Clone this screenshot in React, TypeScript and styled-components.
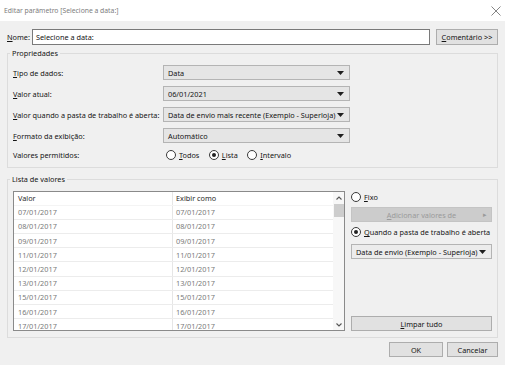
import styled, { createGlobalStyle } from "styled-components";

const GlobalStyle = createGlobalStyle`
  html, body {
    margin: 0;
    padding: 0;
    background: #f0f0f0;
  }
  body {
    font-family: "Noto Sans", "Open Sans", sans-serif;
  }
`;

const Window = styled.div`
  width: 505px;
  height: 365px;
  display: flex;
  flex-direction: column;
  background: #f0f0f0;
  color: #141414;
  font-size: 7.3px;
  white-space: nowrap;
  overflow: hidden;
`;

const TitleBar = styled.div`
  height: 21px;
  flex-shrink: 0;
  background: #ffffff;
  display: flex;
  align-items: center;
  justify-content: space-between;
  padding: 0 4px 0 4px;
  box-sizing: border-box;
`;

const Title = styled.span`
  color: #7c7c7c;
  font-size: 6.8px;
`;

const Body = styled.div`
  flex: 1;
  display: flex;
  flex-direction: column;
  padding: 8px 7px 0 7px;
`;

const NameRow = styled.div`
  display: flex;
  align-items: center;
  height: 16px;
`;

const NameLabel = styled.span`
  width: 25px;
`;

const TextInput = styled.div`
  width: 398px;
  height: 16px;
  box-sizing: border-box;
  border: 1px solid #7a7a7a;
  background: #ffffff;
  display: flex;
  align-items: center;
  padding-left: 3px;
`;

const Button = styled.div<{ $w?: number; $disabled?: boolean }>`
  width: ${(p) => (p.$w ? `${p.$w}px` : "auto")};
  height: 15px;
  box-sizing: border-box;
  border: 1px solid ${(p) => (p.$disabled ? "#c4c4c4" : "#adadad")};
  background: ${(p) => (p.$disabled ? "#cccccc" : "#e1e1e1")};
  color: ${(p) => (p.$disabled ? "#9a9a9a" : "#141414")};
  display: flex;
  align-items: center;
  justify-content: center;
`;

const CommentButton = styled(Button)`
  margin-left: 6px;
  height: 16px;
`;

const Group = styled.fieldset<{ $mt: number }>`
  margin: ${(p) => p.$mt}px 0 0 0;
  padding: 0 5px 6px 5px;
  border: 1px solid #dcdcdc;
  min-width: 0;
`;

const Legend = styled.legend`
  padding: 0 2px;
  margin-left: -3px;
  line-height: 12px;
  font-size: 7.3px;
`;

const PropGrid = styled.div`
  display: grid;
  grid-template-columns: 150px 187px;
  grid-template-rows: 15px 15px 15px 15px 12px;
  row-gap: 6px;
  align-items: center;
  padding: 6px 0 0 0;
`;

const Select = styled.div<{ $bg?: string }>`
  height: 15px;
  box-sizing: border-box;
  border: 1px solid #b4b4b4;
  background: ${(p) => p.$bg || "#e5e5e5"};
  display: flex;
  align-items: center;
  justify-content: space-between;
  padding: 0 5px 0 4px;
`;

const RadioRow = styled.div`
  display: flex;
  align-items: center;
  gap: 9.5px;
  margin-left: 3px;
`;

const RadioItem = styled.div`
  display: flex;
  align-items: center;
  gap: 3px;
  height: 12px;
`;

const RadioCircle = styled.span<{ $on?: boolean }>`
  width: 10px;
  height: 10px;
  box-sizing: border-box;
  border-radius: 50%;
  border: 1px solid #3a3a3a;
  background: #ffffff;
  display: flex;
  align-items: center;
  justify-content: center;
  &::after {
    content: "";
    width: 4px;
    height: 4px;
    border-radius: 50%;
    background: ${(p) => (p.$on ? "#222222" : "transparent")};
  }
`;

const ListArea = styled.div`
  display: flex;
  gap: 6px;
  padding-top: 6px;
`;

const ListBox = styled.div`
  flex: 1;
  height: 140px;
  box-sizing: border-box;
  border: 1px solid #8a8a8a;
  background: #ffffff;
  display: flex;
  overflow: hidden;
`;

const Table = styled.div`
  flex: 1;
  display: flex;
  flex-direction: column;
  overflow: hidden;
`;

const Row = styled.div<{ $head?: boolean }>`
  display: flex;
  flex-shrink: 0;
  height: ${(p) => (p.$head ? "13.6px" : "14.2px")};
  box-sizing: border-box;
  border-bottom: 1px solid ${(p) => (p.$head ? "#f4f4f4" : "#ececec")};
  color: ${(p) => (p.$head ? "#2a2a2a" : "#7a7a7a")};
`;

const Cell = styled.div<{ $first?: boolean }>`
  display: flex;
  align-items: center;
  width: ${(p) => (p.$first ? "159px" : "auto")};
  flex: ${(p) => (p.$first ? "none" : "1")};
  box-sizing: border-box;
  padding-left: ${(p) => (p.$first ? "4px" : "3px")};
  border-right: ${(p) => (p.$first ? "1px solid #e6e6e6" : "none")};
`;

const ScrollBar = styled.div`
  width: 11px;
  background: #f7f7f7;
  display: flex;
  flex-direction: column;
  align-items: center;
`;

const ScrollArrow = styled.div`
  height: 11px;
  width: 11px;
  display: flex;
  align-items: center;
  justify-content: center;
`;

const Thumb = styled.div`
  width: 10px;
  height: 13px;
  background: #cdcdcd;
  margin-top: 1px;
`;

const ScrollTrack = styled.div`
  flex: 1;
`;

const SidePanel = styled.div`
  width: 141px;
  display: flex;
  flex-direction: column;
`;

const SideGap = styled.div<{ $h: number }>`
  height: ${(p) => p.$h}px;
  flex-shrink: 0;
`;

const AddLabel = styled.span`
  flex: 1;
  text-align: center;
`;

const AddArrow = styled.span`
  width: 12px;
  display: flex;
  justify-content: center;
  font-size: 7px;
`;

const ClearButton = styled(Button)`
  margin-top: auto;
`;

const Footer = styled.div`
  display: flex;
  justify-content: flex-end;
  gap: 4px;
  margin-top: 4px;
`;

const DownTriangle = () => (
  <svg width="7" height="4" viewBox="0 0 7 4">
    <polygon points="0,0 7,0 3.5,4" fill="#1e1e1e" />
  </svg>
);

const Chevron = ({ up }: { up?: boolean }) => (
  <svg width="6" height="4" viewBox="0 0 6 4">
    <polyline
      points={up ? "0.5,3.5 3,1 5.5,3.5" : "0.5,0.5 3,3 5.5,0.5"}
      fill="none"
      stroke="#555"
      strokeWidth="1.1"
    />
  </svg>
);

const Radio = ({ on, label, u }: { on?: boolean; label: string; u: string }) => (
  <RadioItem>
    <RadioCircle $on={on} />
    <span>
      <u>{u}</u>
      {label}
    </span>
  </RadioItem>
);

const dates = [
  "07/01/2017",
  "08/01/2017",
  "09/01/2017",
  "11/01/2017",
  "12/01/2017",
  "13/01/2017",
  "15/01/2017",
  "16/01/2017",
  "17/01/2017",
];

export default function App() {
  return (
    <Window>
      <GlobalStyle />
      <TitleBar>
        <Title>Editar parâmetro [Selecione a data:]</Title>
        <svg width="10" height="10" viewBox="0 0 10 10">
          <path d="M0.5 0.5 L9.5 9.5 M9.5 0.5 L0.5 9.5" stroke="#666" strokeWidth="0.8" />
        </svg>
      </TitleBar>
      <Body>
        <NameRow>
          <NameLabel>
            <u>N</u>ome:
          </NameLabel>
          <TextInput>Selecione a data:</TextInput>
          <CommentButton $w={62}>
            <span>
              <u>C</u>omentário &gt;&gt;
            </span>
          </CommentButton>
        </NameRow>

        <Group $mt={2}>
          <Legend>Propriedades</Legend>
          <PropGrid>
            <span>
              <u>T</u>ipo de dados:
            </span>
            <Select>
              Data
              <DownTriangle />
            </Select>
            <span>
              <u>V</u>alor atual:
            </span>
            <Select>
              06/01/2021
              <DownTriangle />
            </Select>
            <span>
              <u>V</u>alor quando a pasta de trabalho é aberta:
            </span>
            <Select>
              Data de envio mais recente (Exemplo - Superloja)
              <DownTriangle />
            </Select>
            <span>
              <u>F</u>ormato da exibição:
            </span>
            <Select>
              Automático
              <DownTriangle />
            </Select>
            <span>Valores permitidos:</span>
            <RadioRow>
              <Radio u="T" label="odos" />
              <Radio on u="L" label="ista" />
              <Radio u="I" label="ntervalo" />
            </RadioRow>
          </PropGrid>
        </Group>

        <Group $mt={5}>
          <Legend>Lista de valores</Legend>
          <ListArea>
            <ListBox>
              <Table>
                <Row $head>
                  <Cell $first>Valor</Cell>
                  <Cell>Exibir como</Cell>
                </Row>
                {dates.map((d) => (
                  <Row key={d}>
                    <Cell $first>{d}</Cell>
                    <Cell>{d}</Cell>
                  </Row>
                ))}
              </Table>
              <ScrollBar>
                <ScrollArrow>
                  <Chevron up />
                </ScrollArrow>
                <Thumb />
                <ScrollTrack />
                <ScrollArrow>
                  <Chevron />
                </ScrollArrow>
              </ScrollBar>
            </ListBox>
            <SidePanel>
              <Radio u="F" label="ixo" />
              <SideGap $h={4} />
              <Button $disabled>
                <AddArrow />
                <AddLabel>
                  <u>A</u>dicionar valores de
                </AddLabel>
                <AddArrow>▸</AddArrow>
              </Button>
              <SideGap $h={4} />
              <Radio on u="Q" label="uando a pasta de trabalho é aberta" />
              <SideGap $h={6} />
              <Select $bg="#ececec">
                Data de envio (Exemplo - Superloja)
                <DownTriangle />
              </Select>
              <ClearButton>
                <span>
                  <u>L</u>impar tudo
                </span>
              </ClearButton>
            </SidePanel>
          </ListArea>
        </Group>

        <Footer>
          <Button $w={54}>OK</Button>
          <Button $w={51}>Cancelar</Button>
        </Footer>
      </Body>
    </Window>
  );
}
